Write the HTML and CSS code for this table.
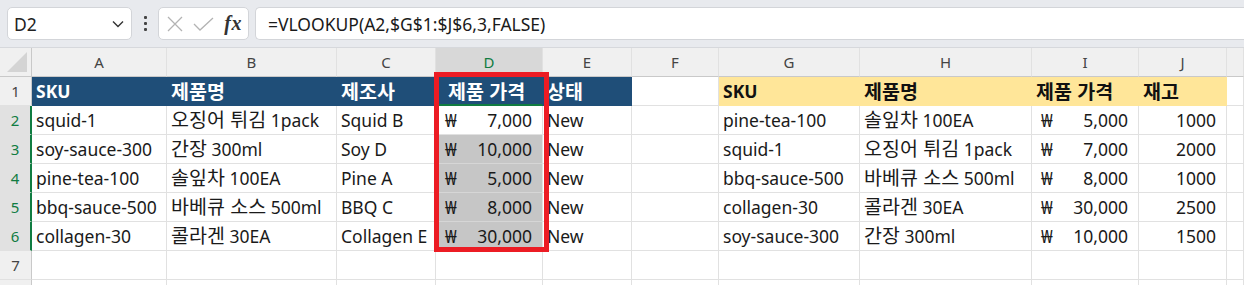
FILE: index.html
```html
<!DOCTYPE html>
<html lang="ko">
<head>
<meta charset="utf-8">
<title>Excel VLOOKUP</title>
<link rel="stylesheet" href="styles.css">
</head>
<body>
<div class="toolbar">
  <div class="namebox">
    <span class="ref">D2</span>
    <svg class="chev" width="12" height="8" viewBox="0 0 12 8"><path d="M1 1.5 L6 6.5 L11 1.5" fill="none" stroke="#333" stroke-width="1.4"/></svg>
  </div>
  <div class="vdots"><i></i><i></i><i></i></div>
  <div class="fxbox">
    <svg class="ico" width="16" height="16" viewBox="0 0 16 16"><path d="M1 1 L15 15 M15 1 L1 15" stroke="#b3b3b3" stroke-width="1.3" fill="none"/></svg>
    <svg class="ico" width="21" height="14" viewBox="0 0 21 14"><path d="M1 7 L7 13 L20 1" stroke="#b3b3b3" stroke-width="1.3" fill="none"/></svg>
    <span class="fx">fx</span>
  </div>
  <div class="formula">=VLOOKUP(A2,$G$1:$J$6,3,FALSE)</div>
</div>

<div class="sheet">
  <!-- column headers -->
  <div class="c corner"><span class="tri"></span></div>
  <div class="c ch">A</div>
  <div class="c ch">B</div>
  <div class="c ch">C</div>
  <div class="c ch sel">D</div>
  <div class="c ch">E</div>
  <div class="c ch">F</div>
  <div class="c ch">G</div>
  <div class="c ch">H</div>
  <div class="c ch">I</div>
  <div class="c ch">J</div>
  <div class="c ch"></div>

  <!-- row 1 -->
  <div class="c rh">1</div>
  <div class="c navy">SKU</div>
  <div class="c navy"><span class="ko">제품명</span></div>
  <div class="c navy"><span class="ko">제조사</span></div>
  <div class="c navy top-sel"><span class="ko">제품 가격</span></div>
  <div class="c navy"><span class="ko">상태</span></div>
  <div class="c"></div>
  <div class="c gold">SKU</div>
  <div class="c gold"><span class="ko">제품명</span></div>
  <div class="c gold"><span class="ko">제품 가격</span></div>
  <div class="c gold"><span class="ko">재고</span></div>
  <div class="c"></div>

  <!-- row 2 -->
  <div class="c rh sel">2</div>
  <div class="c">squid-1</div>
  <div class="c"><span><span class="ko">오징어 튀김</span> 1pack</span></div>
  <div class="c">Squid B</div>
  <div class="c acct"><span>₩</span><span>7,000</span></div>
  <div class="c">New</div>
  <div class="c"></div>
  <div class="c">pine-tea-100</div>
  <div class="c"><span><span class="ko">솔잎차</span> 100EA</span></div>
  <div class="c acct"><span>₩</span><span>5,000</span></div>
  <div class="c num">1000</div>
  <div class="c"></div>

  <!-- row 3 -->
  <div class="c rh sel">3</div>
  <div class="c">soy-sauce-300</div>
  <div class="c"><span><span class="ko">간장</span> 300ml</span></div>
  <div class="c">Soy D</div>
  <div class="c acct shade"><span>₩</span><span>10,000</span></div>
  <div class="c">New</div>
  <div class="c"></div>
  <div class="c">squid-1</div>
  <div class="c"><span><span class="ko">오징어 튀김</span> 1pack</span></div>
  <div class="c acct"><span>₩</span><span>7,000</span></div>
  <div class="c num">2000</div>
  <div class="c"></div>

  <!-- row 4 -->
  <div class="c rh sel">4</div>
  <div class="c">pine-tea-100</div>
  <div class="c"><span><span class="ko">솔잎차</span> 100EA</span></div>
  <div class="c">Pine A</div>
  <div class="c acct shade"><span>₩</span><span>5,000</span></div>
  <div class="c">New</div>
  <div class="c"></div>
  <div class="c">bbq-sauce-500</div>
  <div class="c"><span><span class="ko">바베큐 소스</span> 500ml</span></div>
  <div class="c acct"><span>₩</span><span>8,000</span></div>
  <div class="c num">1000</div>
  <div class="c"></div>

  <!-- row 5 -->
  <div class="c rh sel">5</div>
  <div class="c">bbq-sauce-500</div>
  <div class="c"><span><span class="ko">바베큐 소스</span> 500ml</span></div>
  <div class="c">BBQ C</div>
  <div class="c acct shade"><span>₩</span><span>8,000</span></div>
  <div class="c">New</div>
  <div class="c"></div>
  <div class="c">collagen-30</div>
  <div class="c"><span><span class="ko">콜라겐</span> 30EA</span></div>
  <div class="c acct"><span>₩</span><span>30,000</span></div>
  <div class="c num">2500</div>
  <div class="c"></div>

  <!-- row 6 -->
  <div class="c rh sel">6</div>
  <div class="c">collagen-30</div>
  <div class="c"><span><span class="ko">콜라겐</span> 30EA</span></div>
  <div class="c">Collagen E</div>
  <div class="c acct shade"><span>₩</span><span>30,000</span></div>
  <div class="c">New</div>
  <div class="c"></div>
  <div class="c">soy-sauce-300</div>
  <div class="c"><span><span class="ko">간장</span> 300ml</span></div>
  <div class="c acct"><span>₩</span><span>10,000</span></div>
  <div class="c num">1500</div>
  <div class="c"></div>

  <!-- row 7 -->
  <div class="c rh">7</div>
  <div class="c"></div><div class="c"></div><div class="c"></div><div class="c"></div><div class="c"></div>
  <div class="c"></div><div class="c"></div><div class="c"></div><div class="c"></div><div class="c"></div><div class="c"></div>

  <!-- row 8 (only its top edge is visible) -->
  <div class="c rh"></div>
  <div class="c"></div><div class="c"></div><div class="c"></div><div class="c"></div><div class="c"></div>
  <div class="c"></div><div class="c"></div><div class="c"></div><div class="c"></div><div class="c"></div><div class="c"></div>

  <div class="highlight"></div>
</div>
</body>
</html>
```

FILE: styles.css
```css
html, body {
  margin: 0;
  padding: 0;
  background: #ffffff;
  overflow: hidden;
}
body {
  width: 1244px;
  height: 285px;
  font-family: "Noto Sans", "Noto Sans CJK KR", sans-serif;
  color: #1a1a1a;
}

/* ---------- formula bar ---------- */
.toolbar {
  height: 48px;
  box-sizing: border-box;
  background: #e8eaee;
  display: flex;
  align-items: flex-start;
  padding: 7px 0 0 7px;
  border-bottom: 1px solid #d6d8dc;
}
.namebox, .fxbox, .formula {
  height: 33px;
  box-sizing: border-box;
  background: #ffffff;
  border: 1px solid #d3d5d9;
  border-radius: 5px;
  display: flex;
  align-items: center;
}
.namebox {
  width: 125px;
  padding: 0 5px 0 6px;
  justify-content: space-between;
}
.ref {
  font-size: 17.5px;
  color: #222;
}
.chev { margin-right: 2px; }
.vdots {
  width: 26px;
  height: 33px;
  display: flex;
  flex-direction: column;
  align-items: center;
  justify-content: center;
  gap: 3px;
}
.vdots i {
  display: block;
  width: 3px;
  height: 3px;
  background: #444;
  border-radius: 1px;
}
.fxbox {
  width: 91px;
  padding: 0 6px 0 8px;
  justify-content: space-between;
}
.fx {
  font-family: "Liberation Serif", "DejaVu Serif", serif;
  font-style: italic;
  font-weight: bold;
  font-size: 20px;
  color: #333;
  letter-spacing: 0.5px;
  line-height: 1;
  margin-top: -2px;
}
.formula {
  flex: 1;
  margin-left: 6px;
  border-right: none;
  border-radius: 5px 0 0 5px;
  padding-left: 12px;
  font-size: 17.5px;
  color: #1a1a1a;
}

/* ---------- sheet grid ---------- */
.sheet {
  position: relative;
  display: grid;
  grid-template-columns: 32px 135px 170px 99px 107px 89px 87px 141px 172px 107px 88px 1fr;
  grid-auto-rows: 29px;
}
.c {
  box-sizing: border-box;
  border-right: 1px solid #e1e1e1;
  border-bottom: 1px solid #e1e1e1;
  display: flex;
  align-items: center;
  padding: 0 4px;
  white-space: nowrap;
  font-size: 17.5px;
  line-height: 24px;
  min-width: 0;
}
.ko {
  font-family: "Noto Sans CJK KR", sans-serif;
  font-size: 19.5px;
  line-height: 1;
}
.corner {
  background: #f0f0f0;
  border-bottom-color: #c9c9c9;
  border-right-color: #c9c9c9;
  position: relative;
}
.tri {
  position: absolute;
  right: 4px;
  bottom: 4px;
  width: 0;
  height: 0;
  border-left: 20px solid transparent;
  border-bottom: 20px solid #d4d4d4;
}
.ch {
  background: #f0f0f0;
  justify-content: center;
  font-size: 15px;
  color: #444;
  border-bottom-color: #c9c9c9;
}
.ch.sel {
  background: #d8d8d8;
  color: #107c41;
  border-bottom: 2px solid #107c41;
}
.rh {
  background: #f0f0f0;
  justify-content: center;
  font-size: 15px;
  color: #444;
  border-right-color: #c9c9c9;
  padding: 0;
}
.rh.sel {
  background: #e1e1e1;
  color: #107c41;
  border-right: 2px solid #107c41;
}
.navy {
  background: #1f4e78;
  border-color: #1f4e78;
  color: #ffffff;
  font-weight: bold;
}
.navy.top-sel {
  border-bottom: 2px solid #107c41;
  padding-left: 12px;
}
.gold {
  background: #ffe699;
  border-color: #ffe699;
  color: #111;
  font-weight: bold;
}
.num {
  justify-content: flex-end;
  padding-right: 10px;
}
.acct {
  justify-content: space-between;
  padding: 0 10px 0 9px;
}
.shade {
  background: #c6c6c6;
  border-bottom-color: #d6d6d6;
}

/* red annotation rectangle drawn over column D */
.highlight {
  position: absolute;
  left: 434px;
  top: 24px;
  width: 115px;
  height: 180px;
  box-sizing: border-box;
  border: 5px solid #ec1c24;
  pointer-events: none;
}
```
